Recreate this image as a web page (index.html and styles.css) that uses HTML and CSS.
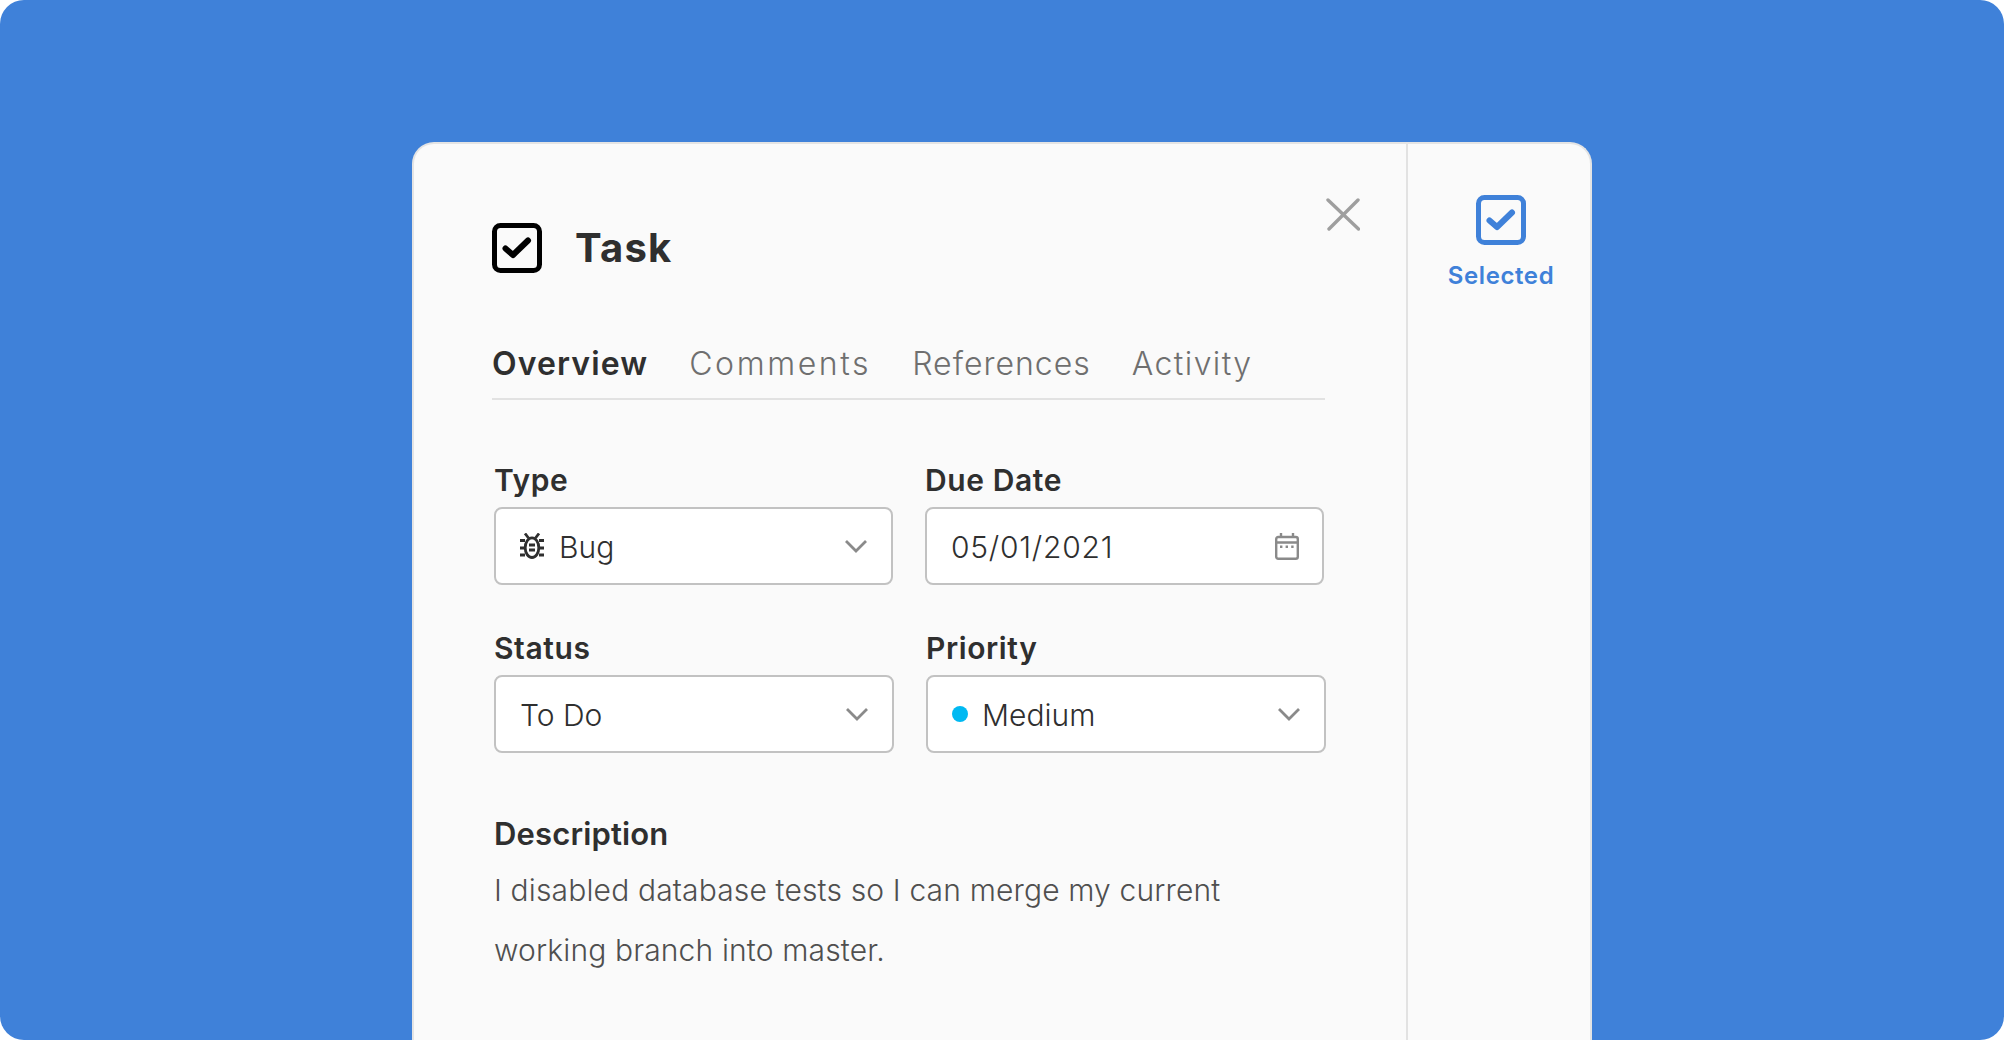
FILE: index.html
```html
<!DOCTYPE html>
<html lang="en">
<head>
<meta charset="utf-8">
<title>Task</title>
<link rel="stylesheet" href="styles.css">
</head>
<body>
<div class="frame">
  <div class="card">
    <main class="main">
      <button class="close" aria-label="Close">
        <svg width="34" height="33" viewBox="0 0 34 33"><path d="M2 2 32.500 31M32 2 3 31" fill="none" stroke="#9e9e9e" stroke-width="3.400" stroke-linecap="round"/></svg>
      </button>
      <header class="head">
        <svg class="task-icon" width="50" height="50" viewBox="0 0 50 50"><rect x="2.500" y="2.500" width="45" height="45" rx="6" fill="none" stroke="#000" stroke-width="5"/><path d="M13.500 25.500l7.500 6.500 15-14.500" fill="none" stroke="#000" stroke-width="6" stroke-linecap="round" stroke-linejoin="round"/></svg>
        <h1 class="title">Task</h1>
      </header>
      <nav class="tabs">
        <span class="tab tab-active">Overview</span>
        <span class="tab tab-comments">Comments</span>
        <span class="tab tab-references">References</span>
        <span class="tab tab-activity">Activity</span>
      </nav>
      <div class="row row-a">
        <div class="field">
          <label class="label">Type</label>
          <div class="box">
            <svg class="bug" width="24" height="26" viewBox="0 0 24 26"><g fill="none" stroke="#2f2f2f" stroke-width="2.800"><ellipse cx="12" cy="14.700" rx="6.800" ry="9.800"/><path d="M0 7.500h5M0 15h5M0 22h5M19 7.500h5M19 15h5M19 22h5M5 .5l3.500 4.500M19 .5 15.500 5M9 12h6M9 17h6"/></g></svg>
            <span class="val">Bug</span>
            <svg class="chev" width="24" height="14" viewBox="0 0 24 14"><path d="M2 2l10 10L22 2" fill="none" stroke="#8a8a8a" stroke-width="2.800"/></svg>
          </div>
        </div>
        <div class="field">
          <label class="label">Due Date</label>
          <div class="box">
            <span class="val date">05/01/2021</span>
            <svg class="cal" width="24" height="27" viewBox="0 0 24 27"><g fill="none" stroke="#8a8a8a" stroke-width="2.400"><rect x="1.200" y="4" width="21.600" height="21.800" rx="2"/><path d="M1.200 9.500h21.600M6 0v5M18 0v5"/></g><path d="M5 12.500h2.400v2.400H5zM10.600 12.500H13v2.400h-2.400zM16.200 12.500h2.400v2.400h-2.400z" fill="#8a8a8a"/></svg>
          </div>
        </div>
      </div>
      <div class="row row-b">
        <div class="field">
          <label class="label">Status</label>
          <div class="box">
            <span class="val">To Do</span>
            <svg class="chev" width="24" height="14" viewBox="0 0 24 14"><path d="M2 2l10 10L22 2" fill="none" stroke="#8a8a8a" stroke-width="2.800"/></svg>
          </div>
        </div>
        <div class="field">
          <label class="label">Priority</label>
          <div class="box">
            <span class="dot"></span>
            <span class="val">Medium</span>
            <svg class="chev" width="24" height="14" viewBox="0 0 24 14"><path d="M2 2l10 10L22 2" fill="none" stroke="#8a8a8a" stroke-width="2.800"/></svg>
          </div>
        </div>
      </div>
      <section class="desc">
        <h2 class="desc-title">Description</h2>
        <p class="desc-text">I disabled database tests so I can merge my current<br>working branch into master.</p>
      </section>
    </main>
    <aside class="side">
      <svg width="50" height="50" viewBox="0 0 50 50"><rect x="2.500" y="2.500" width="45" height="45" rx="6" fill="none" stroke="#3f81d9" stroke-width="5"/><path d="M13.500 25.500l7.500 6.500 15-14.500" fill="none" stroke="#3f81d9" stroke-width="6" stroke-linecap="round" stroke-linejoin="round"/></svg>
      <span class="selected">Selected</span>
    </aside>
  </div>
</div>
</body>
</html>
```

FILE: styles.css
```css
* { box-sizing: border-box; }
html, body { margin: 0; height: 100%; background: #fff; }
body { font-family: "Inter", "Liberation Sans", sans-serif; }
.frame {
  width: 2004px; height: 1040px; background: #3f81d9; border-radius: 24px;
  padding: 142px 412px 0 412px; display: flex; overflow: hidden;
}
.card {
  flex: 1; display: flex; background: #fafafa;
  border: 2px solid #e4e4e4; border-bottom: 0; border-radius: 22px 22px 0 0;
}
.main {
  position: relative; width: 994px; border-right: 2px solid #e2e2e2;
  padding: 79px 0 0 78px;
}
.close {
  position: absolute; left: 912px; top: 54px; padding: 0; border: 0; background: none; display: block; line-height: 0;
}
.head { display: flex; align-items: center; gap: 33px; height: 50px; }
.task-icon { display: block; }
.title {
  margin: 0; font-size: 40px; font-weight: 700; color: #2f2f2f; line-height: 50px; letter-spacing: 1.2px;
}
.tabs {
  width: 833px; height: 76px; margin-top: 51px; padding-top: 20px; border-bottom: 2px solid #e2e2e2;
  display: flex; gap: 41px; font-size: 32px; line-height: 40px; color: #6f6f6f; font-weight: 300;
}
.tab-active { font-weight: 600; color: #2f2f2f; letter-spacing: 1.1px; }
.tab-comments { letter-spacing: 2.6px; }
.tab-references { letter-spacing: 1px; }
.tab-activity { letter-spacing: 1.4px; }
.row { display: flex; gap: 32px; }
.row-a { width: 830px; margin: 59px 0 0 2px; }
.row-b { width: 832px; margin: 42px 0 0 2px; }
.field { flex: 1 1 0; min-width: 0; }
.label { display: block; font-size: 30px; line-height: 40px; height: 48px; padding-top: 1px; font-weight: 600; color: #2f2f2f; letter-spacing: .6px; }
.box {
  height: 78px; background: #fff; border: 2px solid #c2c2c2; border-radius: 8px;
  display: flex; align-items: center; padding: 0 23px 0 24px; gap: 14px;
}
.val { flex: 1; padding-top: 2px; font-size: 30px; font-weight: 300; color: #2f2f2f; }
.date { letter-spacing: .75px; }
.bug { margin-right: 1px; }
.dot { width: 16px; height: 16px; background: #00b9f2; border-radius: 50%; }
.desc { margin: 61px 0 0 2px; }
.desc-title { margin: 0; font-size: 31px; line-height: 40px; font-weight: 600; color: #2f2f2f; letter-spacing: .15px; }
.desc-text { margin: 6px 0 0; font-size: 30px; line-height: 60px; font-weight: 300; color: #4f4f4f; letter-spacing: .15px; }
.side { flex: 1; display: flex; flex-direction: column; align-items: center; padding: 51px 0 0 4px; }
.selected { margin-top: 15px; font-size: 24px; line-height: 32px; font-weight: 600; color: #3f81d9; letter-spacing: .6px; }
```
